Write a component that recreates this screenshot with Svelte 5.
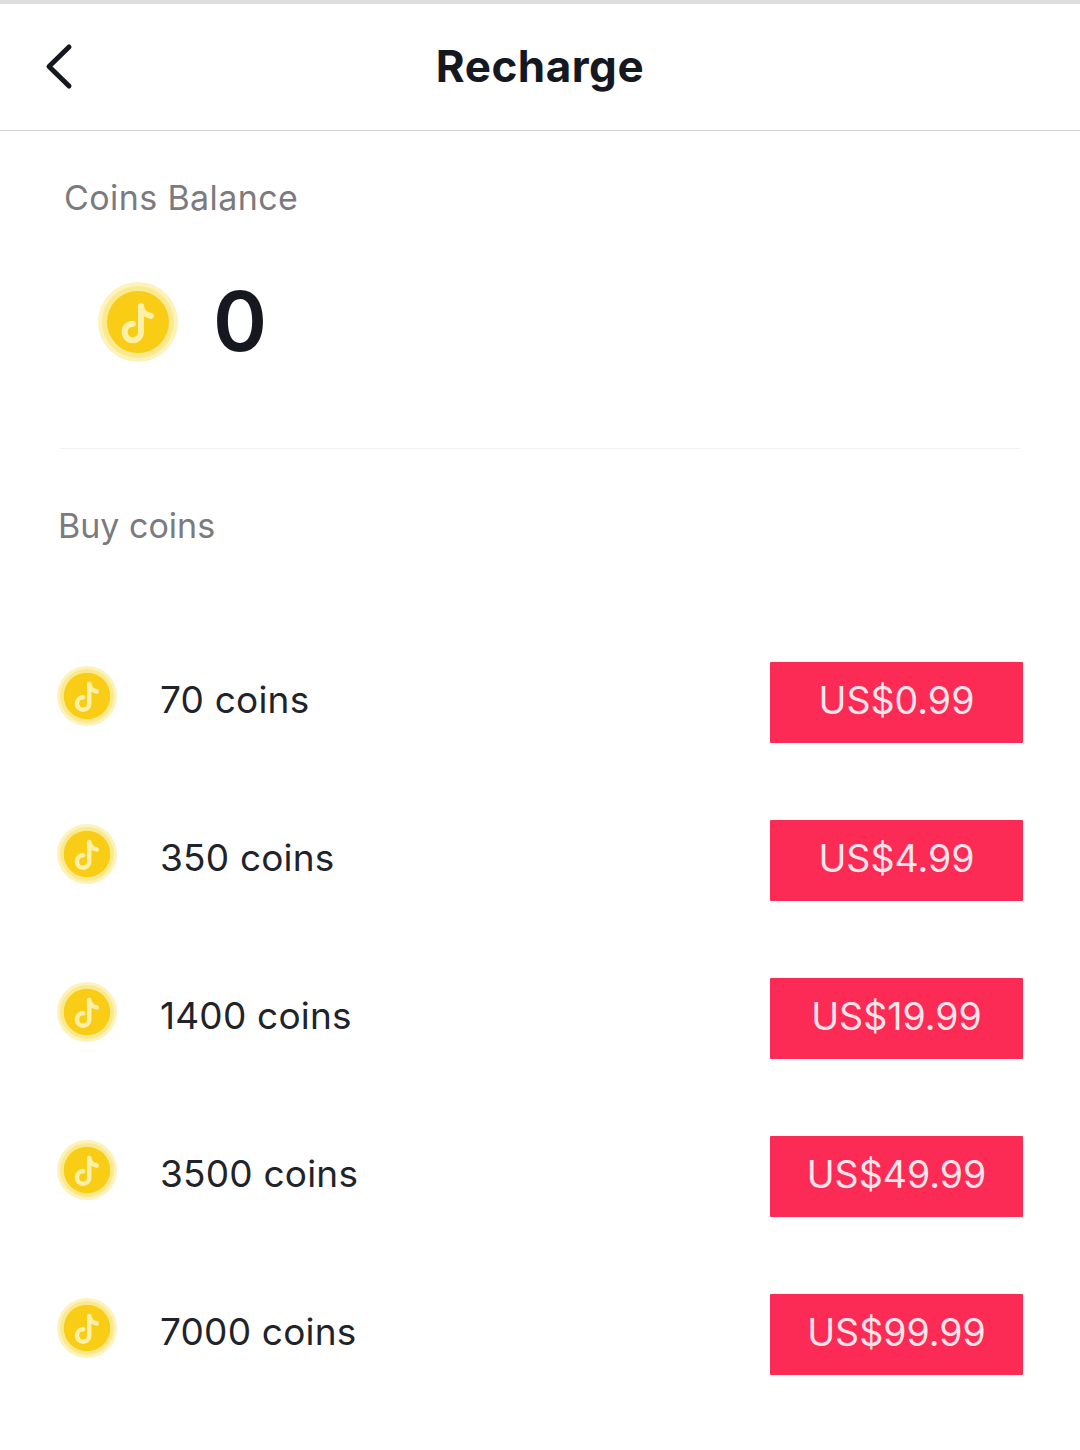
<script>
  const packs = [
    { coins: '70 coins', price: 'US$0.99' },
    { coins: '350 coins', price: 'US$4.99' },
    { coins: '1400 coins', price: 'US$19.99' },
    { coins: '3500 coins', price: 'US$49.99' },
    { coins: '7000 coins', price: 'US$99.99' }
  ];
</script>

{#snippet coin(cls)}
  <svg class={cls} viewBox="0 0 80 80" aria-hidden="true">
    <circle cx="40" cy="40" r="40" fill="#fdf2bb" />
    <circle cx="40" cy="40" r="36" fill="#fbe98f" />
    <circle cx="40" cy="40" r="31" fill="#f9cc16" />
    <path d="M43 24 V50 a8.2 8.2 0 1 1 -8.2 -8.2" fill="none" stroke="#fdf0a8" stroke-width="6" stroke-linecap="round" />
    <path d="M43 24.5 C44 29.5 48 33 53 34" fill="none" stroke="#fdf0a8" stroke-width="6" stroke-linecap="round" />
  </svg>
{/snippet}

<div class="page">
  <header class="bar">
    <button class="back" aria-label="Back">
      <svg viewBox="0 0 30 48" width="30" height="48">
        <path d="M25 4 L5 23.5 L25 43" fill="none" stroke="#16181f" stroke-width="5" stroke-linecap="round" stroke-linejoin="round" />
      </svg>
    </button>
    <h1>Recharge</h1>
  </header>

  <section class="balance">
    <div class="label balance-label">Coins Balance</div>
    <div class="amount">
      {@render coin('coin-big')}
      <span>0</span>
    </div>
  </section>

  <section class="buy">
    <div class="label">Buy coins</div>
    <ul>
      {#each packs as p}
        <li>
          {@render coin('coin-small')}
          <span class="name">{p.coins}</span>
          <button class="price">{p.price}</button>
        </li>
      {/each}
    </ul>
  </section>
</div>

<style>
  :global(body) {
    margin: 0;
    background: #fff;
  }
  .page {
    width: 1080px;
    height: 1450px;
    box-sizing: border-box;
    border-top: 4px solid #dedede;
    font-family: Inter, "Open Sans", sans-serif;
    color: #22232a;
    overflow: hidden;
  }
  .bar {
    position: relative;
    height: 127px;
    box-sizing: border-box;
    border-bottom: 1px solid #d2d2d2;
    display: flex;
    align-items: center;
    justify-content: center;
  }
  .back {
    position: absolute;
    left: 44px;
    top: 39px;
    padding: 0;
    border: 0;
    background: none;
    display: flex;
  }
  h1 {
    margin: 0;
    font-size: 44px;
    font-weight: 700;
    letter-spacing: 0.5px;
    color: #16181f;
    line-height: 1;
    position: relative;
    top: -1px;
  }
  .label {
    font-size: 34px;
    line-height: 44px;
    color: #7b7b7f;
  }
  .balance {
    margin: 0 60px;
    height: 318px;
    box-sizing: border-box;
    padding-top: 45px;
    border-bottom: 1px solid #f2f2f2;
  }
  .balance-label {
    padding-left: 4px;
    letter-spacing: 0.4px;
  }
  .amount {
    display: flex;
    align-items: center;
    gap: 35px;
    margin-top: 62px;
    padding-left: 38px;
  }
  .amount span {
    font-size: 82px;
    line-height: 80px;
    font-weight: 600;
    color: #16181f;
  }
  .coin-big {
    width: 80px;
    height: 80px;
    display: block;
    filter: blur(0.7px);
  }
  .buy {
    padding: 55px 57px 0 58px;
  }
  ul {
    list-style: none;
    margin: 114px 0 0;
    padding: 0;
    display: flex;
    flex-direction: column;
    gap: 77px;
  }
  li {
    height: 81px;
    display: flex;
    align-items: center;
  }
  .coin-small {
    width: 60px;
    height: 60px;
    display: block;
    align-self: flex-start;
    margin: 4px 0 0 -1px;
    filter: blur(0.6px);
  }
  .name {
    margin-left: 43px;
    flex: 1;
    font-size: 37px;
    letter-spacing: 0.2px;
    color: #22232a;
    padding-bottom: 6px;
  }
  .price {
    width: 253px;
    height: 81px;
    padding: 0 0 4px;
    border: 0;
    border-radius: 1px;
    background: #fb2b55;
    color: #fde4ea;
    font: inherit;
    font-size: 37.5px;
  }
</style>
